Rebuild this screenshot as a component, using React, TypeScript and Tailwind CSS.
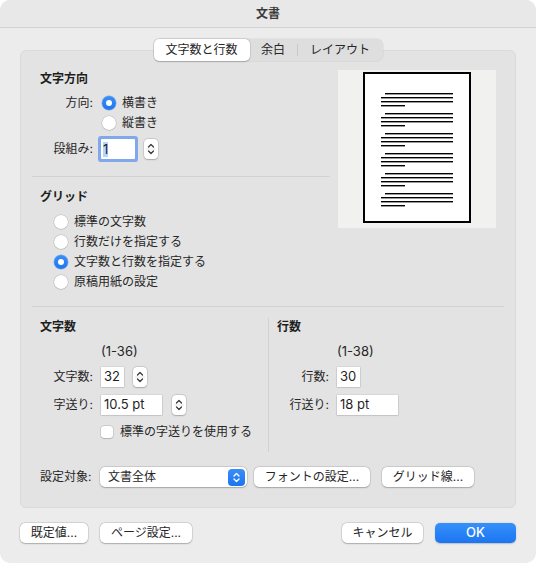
import React from "react";

const font = "font-['Inter','Noto_Sans_CJK_JP',sans-serif]";

// small round radio button in macOS style
const Radio = ({ checked = false }: { checked?: boolean }) =>
  checked ? (
    <span className="flex h-[14px] w-[14px] shrink-0 items-center justify-center rounded-full bg-gradient-to-b from-[#3b8ff8] to-[#1a76f2] shadow-[0_0_0_0.5px_rgba(0,80,200,0.4)]">
      <span className="h-[6px] w-[6px] rounded-full bg-white" />
    </span>
  ) : (
    <span className="h-[14px] w-[14px] shrink-0 rounded-full bg-white shadow-[0_0_0_0.5px_rgba(0,0,0,0.18),0_0.5px_1px_rgba(0,0,0,0.12)]" />
  );

// up/down arrows next to number fields
const Stepper = () => (
  <span className="flex h-[20px] w-[14px] shrink-0 rounded-[4px] bg-white shadow-[0_0_0_0.5px_rgba(0,0,0,0.15),0_0.5px_1.5px_rgba(0,0,0,0.2)]">
    <svg width="14" height="20" viewBox="0 0 14 20" fill="none">
      <path d="M4.5 8 L7 5.5 L9.5 8" stroke="#3a3a3a" strokeWidth="1.3" strokeLinecap="round" strokeLinejoin="round" />
      <line x1="2" y1="10" x2="12" y2="10" stroke="#e6e6e6" strokeWidth="1" />
      <path d="M4.5 12 L7 14.5 L9.5 12" stroke="#3a3a3a" strokeWidth="1.3" strokeLinecap="round" strokeLinejoin="round" />
    </svg>
  </span>
);

const Field = ({ value, width }: { value: string; width: string }) => (
  <span className={`flex h-[20px] ${width} shrink-0 items-center bg-white px-[3px] text-[13px] text-[#1f1f1f] shadow-[0_0_0_0.5px_rgba(0,0,0,0.1),0_0.5px_1.5px_rgba(0,0,0,0.22)]`}>
    {value}
  </span>
);

const Button = ({ children, className = "" }: { children: React.ReactNode; className?: string }) => (
  <button className={`flex h-[20px] items-center justify-center whitespace-nowrap rounded-[5px] bg-white text-[12px] text-[#262626] shadow-[0_0_0_0.5px_rgba(0,0,0,0.14),0_0.5px_1.5px_rgba(0,0,0,0.22)] ${className}`}>
    {children}
  </button>
);

// the little page drawing with text lines
const PagePreview = () => {
  const groups = [0, 1, 2, 3, 4, 5];
  return (
    <div className="flex h-[158px] w-[158px] shrink-0 justify-center bg-[#f1f1ef] pt-[2px]">
      <div className="h-[151px] w-[108px] border-2 border-black bg-white">
        <svg width="104" height="147" viewBox="0 0 104 147">
          {groups.map((g) => {
            const y = 19 + g * 20;
            return (
              <g key={g} fill="#000">
                <rect x="20" y={y} width="68" height="1.4" />
                <rect x="16" y={y + 4} width="72" height="1.4" />
                <rect x="16" y={y + 8} width="72" height="1.4" />
                <rect x="16" y={y + 12} width="24" height="1.4" />
              </g>
            );
          })}
        </svg>
      </div>
    </div>
  );
};

export default function App() {
  return (
    <div className={`${font} flex h-[563px] w-[536px] flex-col overflow-hidden rounded-[10px] bg-[#ececec] text-[12px] text-[#262626]`}>
      {/* title bar */}
      <div className="flex h-[28px] shrink-0 items-center justify-center border-b border-[#d3d3d3] bg-[#e8e8e8] text-[12px] font-semibold text-[#3b3b3b]">
        文書
      </div>

      <div className="flex flex-col px-[20px] pt-[11px]">
        {/* tabs */}
        <div className="relative z-10 flex h-[22px] justify-center">
          <div className="flex h-[22px] items-center rounded-[6px] bg-[#dedede] shadow-[0_0_0_0.5px_rgba(0,0,0,0.08)]">
            <span className="flex h-[22px] w-[96px] items-center justify-center rounded-[5px] bg-white shadow-[0_0_0_0.5px_rgba(0,0,0,0.12),0_0.5px_1.5px_rgba(0,0,0,0.2)]">
              文字数と行数
            </span>
            <span className="flex h-[22px] w-[47px] items-center justify-center">余白</span>
            <span className="h-[12px] w-px bg-[#c9c9c9]" />
            <span className="flex h-[22px] w-[85px] items-center justify-center">レイアウト</span>
          </div>
        </div>

        {/* main group box */}
        <div className="-mt-[11px] flex flex-col rounded-[6px] border border-[#dadada] bg-[#e3e3e3] px-[11px] pb-[20px]">
          <div className="flex">
            <div className="flex w-[298px] flex-col pt-[20px]">
              <div className="h-[16px] pl-[8px] font-bold leading-[16px] text-[#1e1e1e]">文字方向</div>
              <div className="mt-[6px] flex h-[20px] items-center pl-[8px]">
                <span className="w-[53px] text-right">方向:</span>
                <span className="ml-[9px] flex items-center gap-[6px]">
                  <Radio checked />
                  横書き
                </span>
              </div>
              <div className="flex h-[20px] items-center pl-[8px]">
                <span className="w-[53px]" />
                <span className="ml-[9px] flex items-center gap-[6px]">
                  <Radio />
                  縦書き
                </span>
              </div>
              <div className="mt-[4px] flex h-[24px] items-center pl-[8px]">
                <span className="w-[53px] text-right">段組み:</span>
                <span className="ml-[8px] flex h-[20px] w-[34px] items-center rounded-[1px] bg-white px-[2px] text-[13px] text-[#1f1f1f] ring-[3px] ring-[#80a8ea]">
                  <span className="bg-[#b5d5fd] leading-[15px]">1</span>
                </span>
                <span className="ml-[9px]">
                  <Stepper />
                </span>
              </div>
              <div className="mt-[15px] h-px bg-[#d2d2d2]" />
              <div className="mt-[12px] h-[16px] pl-[8px] font-bold leading-[16px] text-[#1e1e1e]">グリッド</div>
              <div className="mt-[7px] flex flex-col pl-[22px]">
                {[
                  ["標準の文字数", false],
                  ["行数だけを指定する", false],
                  ["文字数と行数を指定する", true],
                  ["原稿用紙の設定", false],
                ].map(([label, on]) => (
                  <div key={label as string} className="flex h-[20px] items-center gap-[6px]">
                    <Radio checked={on as boolean} />
                    {label}
                  </div>
                ))}
              </div>
            </div>
            <div className="ml-[8px] mt-[19px]">
              <PagePreview />
            </div>
          </div>

          <div className="mt-[14px] h-px bg-[#d2d2d2]" />

          {/* characters / lines */}
          <div className="mt-[11px] flex">
            <div className="flex w-[236px] flex-col pl-[8px] pt-[1px]">
              <div className="h-[16px] font-bold leading-[16px] text-[#1e1e1e]">文字数</div>
              <div className="ml-[61px] mt-[8px] h-[16px] text-[13px] leading-[16px]">(1-36)</div>
              <div className="mt-[8px] flex h-[20px] items-center">
                <span className="w-[53px] text-right">文字数:</span>
                <span className="ml-[8px]">
                  <Field value="32" width="w-[23px]" />
                </span>
                <span className="ml-[9px]">
                  <Stepper />
                </span>
              </div>
              <div className="mt-[8px] flex h-[20px] items-center">
                <span className="w-[53px] text-right">字送り:</span>
                <span className="ml-[8px]">
                  <Field value="10.5 pt" width="w-[61px]" />
                </span>
                <span className="ml-[10px]">
                  <Stepper />
                </span>
              </div>
              <div className="ml-[61px] mt-[9px] flex h-[16px] items-center gap-[7px]">
                <span className="h-[12px] w-[12px] rounded-[3px] bg-white shadow-[0_0_0_0.5px_rgba(0,0,0,0.18),0_0.5px_1px_rgba(0,0,0,0.12)]" />
                標準の字送りを使用する
              </div>
            </div>
            <div className="flex h-[134px] flex-1 flex-col border-l border-[#d2d2d2] pl-[8px] pt-[1px]">
              <div className="h-[16px] font-bold leading-[16px] text-[#1e1e1e]">行数</div>
              <div className="ml-[60px] mt-[8px] h-[16px] text-[13px] leading-[16px]">(1-38)</div>
              <div className="mt-[8px] flex h-[20px] items-center">
                <span className="w-[52px] text-right">行数:</span>
                <span className="ml-[8px]">
                  <Field value="30" width="w-[23px]" />
                </span>
              </div>
              <div className="mt-[8px] flex h-[20px] items-center">
                <span className="w-[52px] text-right">行送り:</span>
                <span className="ml-[8px]">
                  <Field value="18 pt" width="w-[61px]" />
                </span>
              </div>
            </div>
          </div>

          {/* apply-to row */}
          <div className="mt-[15px] flex h-[20px] items-center pl-[8px]">
            <span className="w-[53px] whitespace-nowrap">設定対象:</span>
            <span className="ml-[7px] flex h-[20px] w-[147px] items-center justify-between rounded-[5px] bg-white pl-[8px] pr-[2px] shadow-[0_0_0_0.5px_rgba(0,0,0,0.14),0_0.5px_1.5px_rgba(0,0,0,0.22)]">
              文書全体
              <span className="flex h-[17px] w-[17px] items-center justify-center rounded-[4px] bg-gradient-to-b from-[#3a8ef8] to-[#1a74f1]">
                <svg width="17" height="17" viewBox="0 0 17 17" fill="none">
                  <path d="M6 7 L8.5 4.5 L11 7" stroke="#fff" strokeWidth="1.4" strokeLinecap="round" strokeLinejoin="round" />
                  <path d="M6 10 L8.5 12.5 L11 10" stroke="#fff" strokeWidth="1.4" strokeLinecap="round" strokeLinejoin="round" />
                </svg>
              </span>
            </span>
            <Button className="ml-[7px] w-[116px]">フォントの設定...</Button>
            <Button className="ml-[12px] w-[92px]">グリッド線...</Button>
          </div>
        </div>

        {/* dialog buttons */}
        <div className="mt-[15px] flex h-[20px] items-center justify-between">
          <div className="flex gap-[12px]">
            <Button className="w-[68px]">既定値...</Button>
            <Button className="w-[92px]">ページ設定...</Button>
          </div>
          <div className="flex gap-[12px]">
            <Button className="w-[81px]">キャンセル</Button>
            <button className="flex h-[20px] w-[81px] items-center justify-center rounded-[5px] bg-gradient-to-b from-[#3690fa] to-[#1b75f1] text-[13px] font-medium text-white shadow-[0_0.5px_1.5px_rgba(0,0,0,0.2)]">
              OK
            </button>
          </div>
        </div>
      </div>
    </div>
  );
}
